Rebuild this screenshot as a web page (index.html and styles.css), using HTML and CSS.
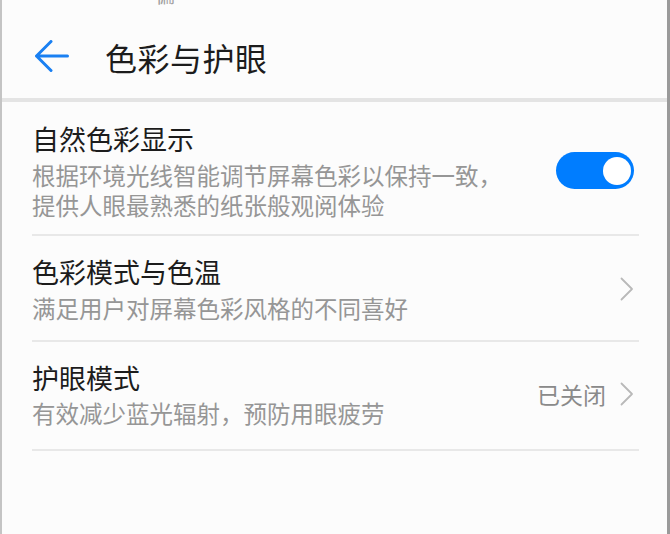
FILE: index.html
```html
<!DOCTYPE html>
<html lang="zh-CN">
<head>
<meta charset="utf-8">
<link rel="stylesheet" href="styles.css">
</head>
<body>
<div class="page">
  <div class="status"><span class="status-text">偏</span></div>
  <header class="appbar">
    <svg class="back" width="34" height="34" viewBox="0 0 34 34">
      <path d="M16 1.5 L1.5 16 L16 30.5 M1.5 16 H32.5" fill="none" stroke="#1a80f2" stroke-width="3" stroke-linecap="round" stroke-linejoin="round"/>
    </svg>
    <h1 class="title">色彩与护眼</h1>
  </header>
  <div class="appbar-shadow"></div>
  <ul class="list">
    <li class="item item-first">
      <div class="text">
        <div class="item-title">自然色彩显示</div>
        <div class="item-sub">根据环境光线智能调节屏幕色彩以保持一致，<br>提供人眼最熟悉的纸张般观阅体验</div>
      </div>
      <div class="switch"><span class="knob"></span></div>
    </li>
    <li class="item">
      <div class="text">
        <div class="item-title">色彩模式与色温</div>
        <div class="item-sub">满足用户对屏幕色彩风格的不同喜好</div>
      </div>
      <svg class="chev" width="14" height="24" viewBox="0 0 14 24"><path d="M1.5 1.5 L12 12 L1.5 22.5" fill="none" stroke="#b9b9b9" stroke-width="1.8" stroke-linecap="round" stroke-linejoin="round"/></svg>
    </li>
    <li class="item item-last">
      <div class="text">
        <div class="item-title">护眼模式</div>
        <div class="item-sub">有效减少蓝光辐射，预防用眼疲劳</div>
      </div>
      <span class="value">已关闭</span>
      <svg class="chev" width="14" height="24" viewBox="0 0 14 24"><path d="M1.5 1.5 L12 12 L1.5 22.5" fill="none" stroke="#b9b9b9" stroke-width="1.8" stroke-linecap="round" stroke-linejoin="round"/></svg>
    </li>
  </ul>
</div>
</body>
</html>
```

FILE: styles.css
```css
* { box-sizing: border-box; }
html, body { margin: 0; padding: 0; }
body {
  background: #fcfcfc;
  font-family: "Noto Sans CJK SC", "Noto Sans", sans-serif;
  width: 670px;
  height: 534px;
  overflow: hidden;
}
.page {
  width: 670px;
  height: 534px;
  border-left: 2px solid #c4c4c4;
  border-right: 3px solid #9a9a9a;
  background: #fcfcfc;
  overflow: hidden;
}
.status {
  height: 0;
  position: relative;
}
.status-text {
  position: absolute;
  left: 153px;
  top: -20px;
  font-size: 20px;
  color: #a0a0a0;
}
.appbar {
  height: 98px;
  display: flex;
  align-items: center;
  padding-left: 33px;
  padding-top: 16px;
}
.back { flex: none; }
.title {
  margin: 0 0 0 36px;
  font-size: 32px;
  font-weight: 400;
  color: #1c1c1c;
  letter-spacing: 0.5px;
}
.appbar-shadow {
  height: 4px;
  background: #e4e4e4;
}
.list {
  list-style: none;
  margin: 0;
  padding: 0 28px 0 30px;
}
.item {
  display: flex;
  align-items: center;
  border-bottom: 2px solid #e8e8e8;
  padding: 18px 0 17px;
}
.item-first { padding: 19px 0 14px; }
.item-last { padding: 18px 0 21px; }
.text { flex: 1; min-width: 0; }
.item-title {
  font-size: 27px;
  line-height: 36px;
  color: #1c1c1c;
}
.item-sub {
  font-size: 23.5px;
  line-height: 30px;
  color: #969696;
  margin-top: 3px;
}
.item-last .item-sub { margin-top: 2px; }
.switch {
  flex: none;
  width: 78px;
  height: 37px;
  border-radius: 19px;
  background: #007dff;
  display: flex;
  align-items: center;
  justify-content: flex-end;
  padding-right: 3px;
  margin-right: 5px;
}
.knob {
  width: 28px;
  height: 28px;
  border-radius: 50%;
  background: #ffffff;
}
.value {
  font-size: 23px;
  color: #8a8a8a;
  margin-right: 14px;
}
.chev { flex: none; margin-right: 5px; }
```
